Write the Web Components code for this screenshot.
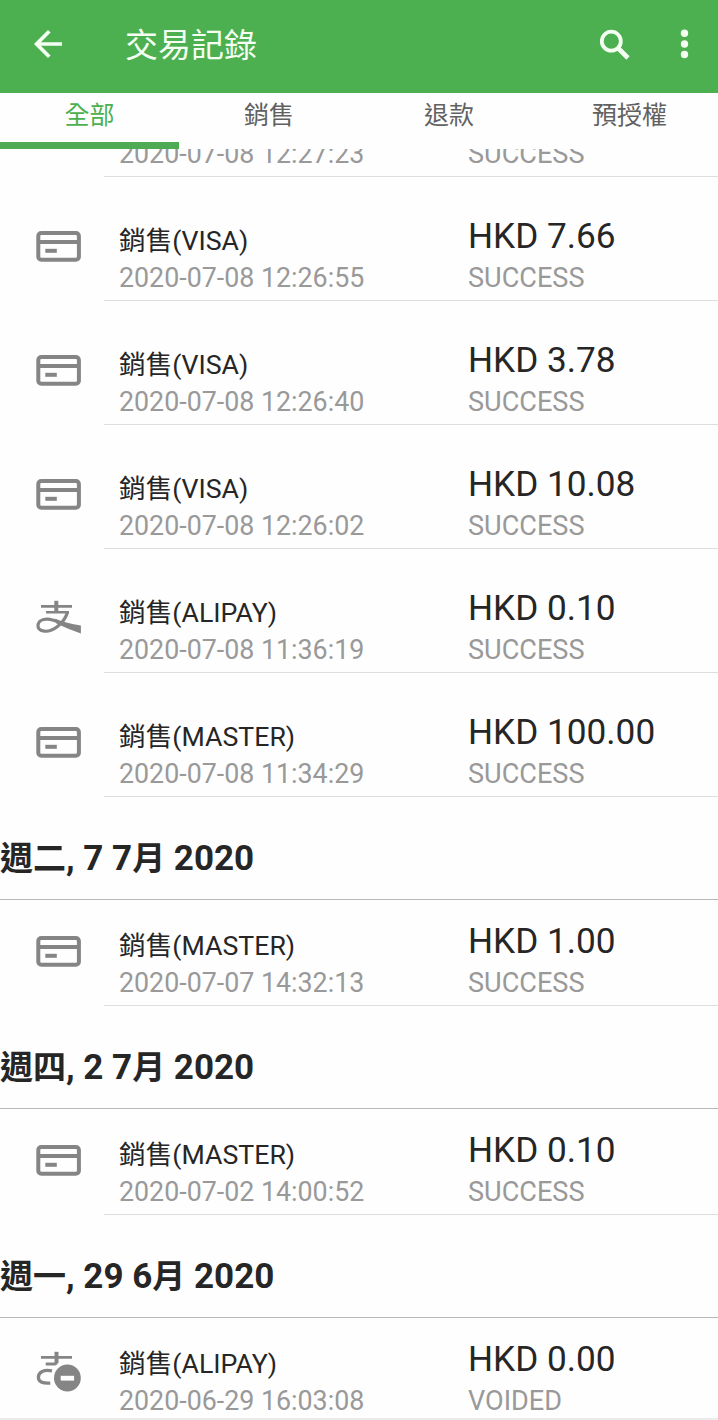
<!DOCTYPE html>
<html lang="zh-Hant">
<head>
<meta charset="UTF-8">
<meta name="viewport" content="width=device-width, initial-scale=1.0">
<title>交易記錄</title>
<style>
    html, body {
        margin: 0;
        height: 100%;
        overflow: hidden;
        background: #fefefe;
        font-family: Roboto, "Noto Sans CJK TC", sans-serif;
        color: #262626;
    }
</style>
</head>
<body>
<transactions-page></transactions-page>

<script>
const ICONS = {
    card: `
        <rect x="3.3" y="6" width="40.6" height="26.8" rx="3" fill="none" stroke="#858585" stroke-width="4"/>
        <rect x="3" y="13" width="41" height="4" fill="#858585"/>
        <rect x="10.3" y="21.8" width="11.5" height="4" fill="#858585"/>`,
    alipay: `
        <path d="M6 7.4H37M11 13.2H34" fill="none" stroke="#858585" stroke-width="2.6"/>
        <path d="M21.3 1.8V13" fill="none" stroke="#858585" stroke-width="4"/>
        <path d="M32.6 13C31 18.5 27.5 23.5 22.5 27.5C18 31 13.500 32.600 9.500 32.200C4.500 31.700 2.600 29 3 26C3.500 22 7.500 20 12.500 20.200C17 20.400 21 22 25 23.500" fill="none" stroke="#858585" stroke-width="3.2"/>
        <path d="M20 19.700C28 22.800 36 25.300 45.900 26.400V34.400C38 31.800 30 28.300 21 24.200Z" fill="#858585"/>`,
    voided: `
        <path d="M6 7.3H37M10.7 14H19.5C21 14 21.5 13.4 21.5 12" fill="none" stroke="#858585" stroke-width="2.8"/>
        <path d="M21.5 1.8V13" fill="none" stroke="#858585" stroke-width="4"/>
        <path d="M17 20.9C9 19.3 3.4 21.8 3.4 27.2C3.4 31.5 7 33.6 15.3 33.1" fill="none" stroke="#858585" stroke-width="3.3"/>
        <circle cx="32.4" cy="28" r="13.4" fill="#858585"/>
        <rect x="25.7" y="25.8" width="13.4" height="4.8" fill="#fefefe"/>`
};

class AppBar extends HTMLElement {
    constructor() {
        super();
        this.attachShadow({ mode: 'open' });
    }

    connectedCallback() {
        this.shadowRoot.innerHTML = `
        <style>
            :host {
                display: flex;
                align-items: center;
                box-sizing: border-box;
                height: 93px;
                flex: none;
                padding: 0 27px 5px 33px;
                background: #4caf50;
                color: #f4fff2;
            }

            h1 {
                flex: 1;
                margin: 0 0 0 62px;
                padding-top: 4px;
                font-size: 33px;
                font-weight: 400;
                line-height: 44px;
            }

            svg {
                display: block;
                fill: none;
                stroke: currentColor;
            }

            .more {
                margin-left: 48px;
                fill: currentColor;
                stroke: none;
            }
        </style>
        <svg width="30" height="30" viewBox="0 0 30 30"><path d="M29 15H4M16.3 2.3L3.6 15L16.3 27.7" stroke-width="3.7"/></svg>
        <h1><slot></slot></h1>
        <svg width="32" height="32" viewBox="0 0 32 32"><circle cx="12.3" cy="13.2" r="9.5" stroke-width="3.8"/><path d="M19 20L29 30" stroke-width="4.6"/></svg>
        <svg class="more" width="12" height="30" viewBox="0 0 12 30"><circle cx="5.5" cy="4.3" r="3.7"/><circle cx="5.5" cy="15" r="3.7"/><circle cx="5.5" cy="25.5" r="3.7"/></svg>
        `;
    }
}

class TabItem extends HTMLElement {
    constructor() {
        super();
        this.attachShadow({ mode: 'open' });
    }

    connectedCallback() {
        this.shadowRoot.innerHTML = `
        <style>
            :host {
                display: block;
                box-sizing: border-box;
                height: 56px;
                padding-top: 5px;
                text-align: center;
                font-size: 25px;
                line-height: 36px;
                color: #616161;
            }

            :host([active]) {
                color: #4caf50;
                border-bottom: 7px solid #4fab53;
            }
        </style>
        <slot></slot>
        `;
    }
}

class TabBar extends HTMLElement {
    constructor() {
        super();
        this.attachShadow({ mode: 'open' });
    }

    connectedCallback() {
        this.shadowRoot.innerHTML = `
        <style>
            :host {
                display: grid;
                grid-template-columns: 179px 180px 180px 181px;
                flex: none;
            }
        </style>
        <slot></slot>
        `;
    }
}

class DayHeader extends HTMLElement {
    constructor() {
        super();
        this.attachShadow({ mode: 'open' });
    }

    connectedCallback() {
        // Chinese glyphs are set a little smaller than the digits
        const date = (this.getAttribute('date') || '').replace(/[\u4e00-\u9fff]+/g, '<span>$&</span>');

        this.shadowRoot.innerHTML = `
        <style>
            :host {
                display: block;
                box-sizing: border-box;
                height: 103px;
                padding-top: 37px;
                border-bottom: 1px solid #b8b8b8;
                font-size: 35px;
                font-weight: 700;
                line-height: 50px;
                white-space: nowrap;
            }

            span {
                font-size: 33px;
            }
        </style>
        <div>${date}</div>
        `;
    }
}

class TransactionRow extends HTMLElement {
    constructor() {
        super();
        this.attachShadow({ mode: 'open' });
    }

    connectedCallback() {
        const icon = ICONS[this.getAttribute('icon')] || '';
        const name = this.getAttribute('name') || '';
        const time = this.getAttribute('time') || '';
        const amount = this.getAttribute('amount') || '';
        const status = this.getAttribute('status') || '';

        this.shadowRoot.innerHTML = `
        <style>
            :host {
                display: flex;
                box-sizing: border-box;
                height: 124px;
                --top: 38px;
            }

            /* the row right under a day header sits closer to it */
            :host([first]) {
                height: 106px;
                --top: 20px;
            }

            .icon {
                flex: none;
                box-sizing: border-box;
                width: 104px;
                padding: calc(var(--top) + 12px) 0 0 35px;
            }

            svg {
                display: block;
            }

            .info {
                flex: 1;
                display: grid;
                grid-template-columns: 349px 1fr;
                grid-template-rows: 44px 36px;
                padding: var(--top) 0 0 15px;
                border-bottom: 1px solid #dedede;
                white-space: nowrap;
            }

            .name {
                font-size: 26.7px;
                line-height: 52px;
            }

            .amount {
                font-size: 35.2px;
                line-height: 42px;
            }

            .time,
            .status {
                font-size: 26.8px;
                line-height: 38px;
                color: #999;
            }

            .status {
                font-size: 27.1px;
            }
        </style>
        <div class="icon"><svg width="48" height="42" viewBox="0 0 48 42">${icon}</svg></div>
        <div class="info">
            <div class="name">${name}</div>
            <div class="amount">${amount}</div>
            <div class="time">${time}</div>
            <div class="status">${status}</div>
        </div>
        `;
    }
}

class TransactionsPage extends HTMLElement {
    constructor() {
        super();
        this.attachShadow({ mode: 'open' });
    }

    connectedCallback() {
        this.shadowRoot.innerHTML = `
        <style>
            :host {
                display: flex;
                flex-direction: column;
                box-sizing: border-box;
                height: 1420px;
                border-bottom: 2px solid #ececec;
            }

            main {
                flex: 1;
                min-height: 0;
                overflow: hidden;
            }

            /* list is scrolled part way through its top row */
            .list {
                margin-top: -96px;
            }
        </style>
        <app-bar>交易記錄</app-bar>
        <tab-bar>
            <tab-item active>全部</tab-item>
            <tab-item>銷售</tab-item>
            <tab-item>退款</tab-item>
            <tab-item>預授權</tab-item>
        </tab-bar>
        <main>
            <div class="list">
                <transaction-row time="2020-07-08 12:27:23" status="SUCCESS"></transaction-row>
                <transaction-row icon="card" name="銷售(VISA)" time="2020-07-08 12:26:55" amount="HKD 7.66" status="SUCCESS"></transaction-row>
                <transaction-row icon="card" name="銷售(VISA)" time="2020-07-08 12:26:40" amount="HKD 3.78" status="SUCCESS"></transaction-row>
                <transaction-row icon="card" name="銷售(VISA)" time="2020-07-08 12:26:02" amount="HKD 10.08" status="SUCCESS"></transaction-row>
                <transaction-row icon="alipay" name="銷售(ALIPAY)" time="2020-07-08 11:36:19" amount="HKD 0.10" status="SUCCESS"></transaction-row>
                <transaction-row icon="card" name="銷售(MASTER)" time="2020-07-08 11:34:29" amount="HKD 100.00" status="SUCCESS"></transaction-row>
                <day-header date="週二, 7 7月 2020"></day-header>
                <transaction-row first icon="card" name="銷售(MASTER)" time="2020-07-07 14:32:13" amount="HKD 1.00" status="SUCCESS"></transaction-row>
                <day-header date="週四, 2 7月 2020"></day-header>
                <transaction-row first icon="card" name="銷售(MASTER)" time="2020-07-02 14:00:52" amount="HKD 0.10" status="SUCCESS"></transaction-row>
                <day-header date="週一, 29 6月 2020"></day-header>
                <transaction-row first icon="voided" name="銷售(ALIPAY)" time="2020-06-29 16:03:08" amount="HKD 0.00" status="VOIDED"></transaction-row>
            </div>
        </main>
        `;
    }
}

customElements.define('app-bar', AppBar);
customElements.define('tab-item', TabItem);
customElements.define('tab-bar', TabBar);
customElements.define('day-header', DayHeader);
customElements.define('transaction-row', TransactionRow);
customElements.define('transactions-page', TransactionsPage);
</script>
</body>
</html>
